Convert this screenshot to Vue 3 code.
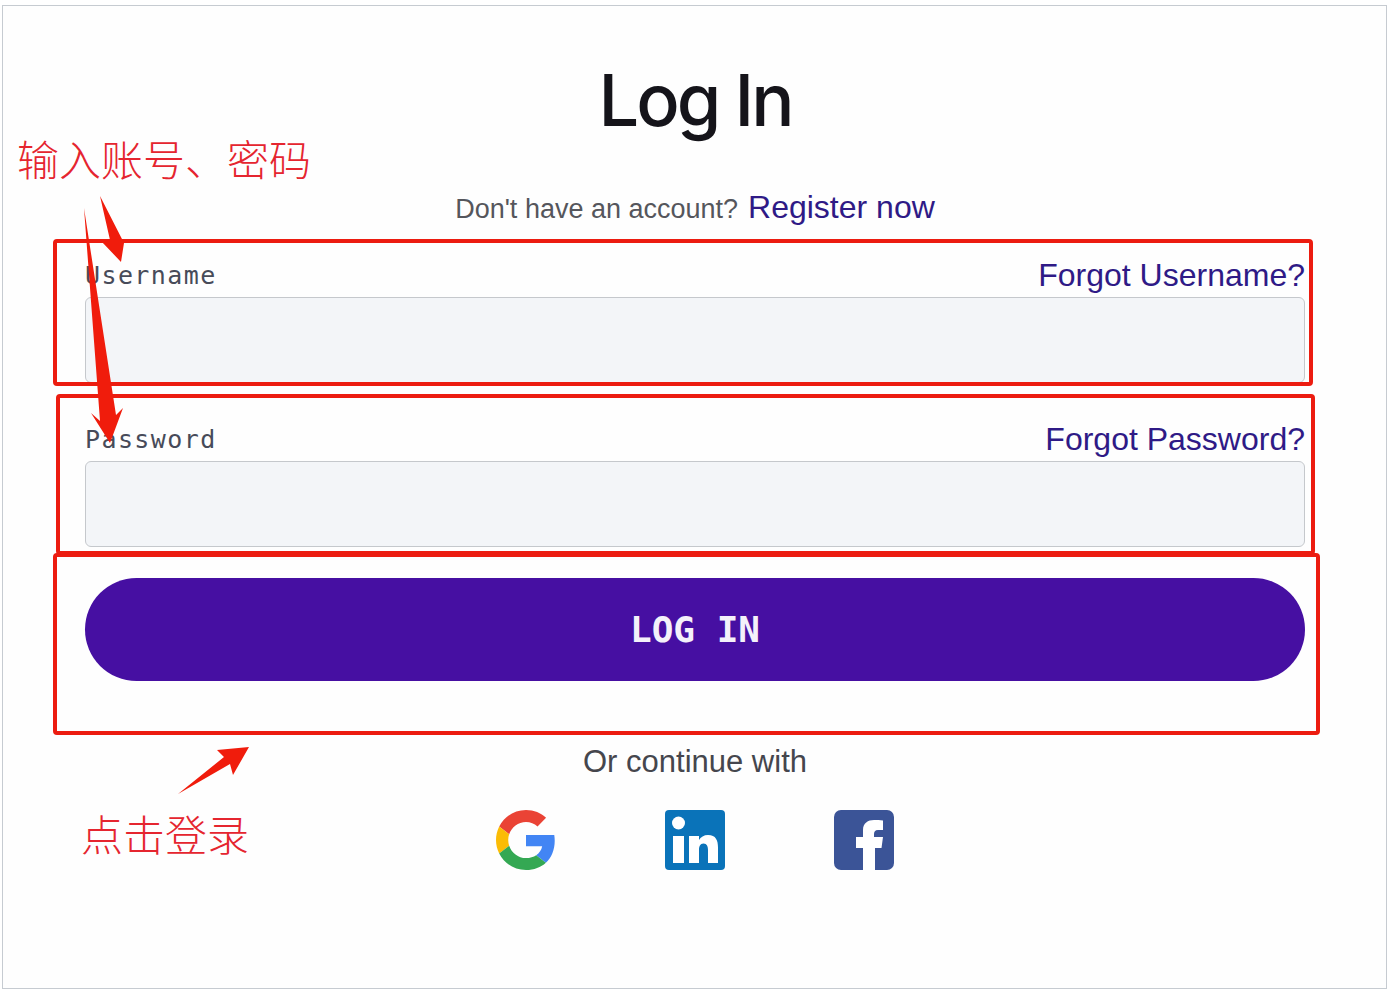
<template>
  <div class="frame">
    <form class="login" @submit.prevent>
      <h1 class="title">Log In</h1>
      <p class="subtitle">
        <span>Don't have an account?</span>
        <a class="link register" href="#">Register now</a>
      </p>

      <div v-for="field in fields" :key="field.label" class="field">
        <div class="field-head">
          <label class="field-label">{{ field.label }}</label>
          <a class="link forgot" href="#">{{ field.forgot }}</a>
        </div>
        <input class="field-input" :type="field.type" />
      </div>

      <button class="submit" type="submit">LOG IN</button>

      <p class="continue">Or continue with</p>
      <div class="socials">
        <svg class="social" viewBox="0 0 48 48" aria-label="Google">
          <path fill="#ea4335" d="M24 9.5c3.54 0 6.71 1.22 9.21 3.6l6.85-6.85C35.9 2.38 30.47 0 24 0 14.62 0 6.51 5.38 2.56 13.22l7.98 6.19C12.43 13.72 17.74 9.5 24 9.5z" />
          <path fill="#4285f4" d="M46.98 24.55c0-1.57-.15-3.09-.38-4.55H24v9.02h12.94c-.58 2.96-2.26 5.48-4.78 7.18l7.73 6c4.51-4.18 7.09-10.36 7.09-17.65z" />
          <path fill="#fbbc05" d="M10.53 28.59c-.48-1.45-.76-2.99-.76-4.59s.27-3.14.76-4.59l-7.98-6.19C.92 16.46 0 20.12 0 24c0 3.88.92 7.54 2.56 10.78l7.97-6.19z" />
          <path fill="#34a853" d="M24 48c6.48 0 11.93-2.13 15.89-5.81l-7.73-6c-2.15 1.45-4.92 2.3-8.16 2.3-6.26 0-11.57-4.22-13.47-9.91l-7.98 6.19C6.51 42.62 14.62 48 24 48z" />
        </svg>
        <svg class="social" viewBox="0 0 60 60" aria-label="LinkedIn">
          <rect width="60" height="60" rx="4" fill="#0a73b9" />
          <circle cx="13.5" cy="13" r="6.5" fill="#fff" />
          <rect x="8" y="26" width="11" height="27" fill="#fff" />
          <path fill="#fff" d="M24 26h10v4c1.6-3 5-5 9-5 8 0 10 5.500 10 12.500V53H43V40c0-3.500-1-6.500-4.500-6.500S34 36.500 34 40v13H24z" />
        </svg>
        <svg class="social" viewBox="0 0 60 60" aria-label="Facebook">
          <rect width="60" height="60" rx="7" fill="#3b5497" />
          <path fill="#fff" d="M29 60V38h-7V27h7v-7c0-7 5-10 11-10 3 0 6 0 9 .5V20h-5c-3 0-4 2-4 4v3h9l-1.500 11H41v22z" />
        </svg>
      </div>
    </form>

    <!-- 标注层:截图上手绘的红框、箭头和文字 -->
    <div class="note-box box-user"></div>
    <div class="note-box box-pass"></div>
    <div class="note-box box-submit"></div>
    <svg class="note-arrows" viewBox="0 0 1394 996">
      <polygon points="100,196 124,243 121,262 102,242 110,240" />
      <polygon points="84,208 116,415 123,408 110,443 91,413 100,421" />
      <polygon points="249,747 217,750 224,757 178,794 230,764 233,775" />
    </svg>
    <span class="note-text note-input">输入账号、密码</span>
    <span class="note-text note-click">点击登录</span>
  </div>
</template>

<script setup>
const fields = [
  { label: 'Username', forgot: 'Forgot Username?', type: 'text' },
  { label: 'Password', forgot: 'Forgot Password?', type: 'password' },
]
</script>

<style>
html,
body {
  background: #fff;
}
</style>

<style scoped>
.frame {
  position: relative;
  box-sizing: border-box;
  width: 1385px;
  height: 984px;
  margin: 5px 0 0 2px;
  border: 1px solid #c6cbd1;
  background: #fefefe;
  font-family: "Liberation Sans", Arial, sans-serif;
}

.login {
  box-sizing: border-box;
  width: 1220px;
  margin-left: 82px;
  padding-top: 54px;
}

.title {
  margin: 0;
  font-family: Inter, sans-serif;
  font-size: 72px;
  font-weight: 500;
  line-height: 80px;
  letter-spacing: -3px;
  text-align: center;
  color: #15141a;
}

.subtitle {
  display: flex;
  justify-content: center;
  align-items: baseline;
  gap: 10px;
  margin: 49px 0 0;
  font-size: 27px;
  line-height: 36px;
  color: #55565c;
}

.link {
  color: #2f1a86;
  text-decoration: none;
}
.register {
  font-size: 32px;
}

.field {
  margin-top: 36px;
}
.subtitle + .field {
  margin-top: 28px;
}
.field-head {
  display: flex;
  justify-content: space-between;
  align-items: center;
  height: 40px;
  margin-bottom: 2px;
}
.field-label {
  font-family: "DejaVu Sans Mono", monospace;
  font-size: 25px;
  letter-spacing: 1.4px;
  color: #474b59;
}
.forgot {
  font-size: 32px;
}
.field-input {
  display: block;
  box-sizing: border-box;
  width: 100%;
  height: 86px;
  border: 1px solid #c5c8cc;
  border-radius: 6px;
  background: #f3f5f8;
}

.submit {
  display: block;
  width: 100%;
  height: 103px;
  margin-top: 31px;
  border: 0;
  border-radius: 52px;
  background: #460fa2;
  font-family: "DejaVu Sans Mono", monospace;
  font-size: 36px;
  font-weight: 700;
  color: #f4f1fa;
}

.continue {
  margin: 63px 0 0;
  font-size: 31px;
  line-height: 36px;
  text-align: center;
  color: #45464d;
}

.socials {
  display: flex;
  justify-content: center;
  gap: 109px;
  margin-top: 30px;
}
.social {
  display: block;
  width: 60px;
  height: 60px;
}

/* 标注层 */
.note-box {
  position: absolute;
  box-sizing: border-box;
  border: 4px solid #ec1c10;
  border-radius: 4px;
}
.box-user {
  left: 50px;
  top: 233px;
  width: 1260px;
  height: 147px;
}
.box-pass {
  left: 53px;
  top: 388px;
  width: 1259px;
  height: 161px;
}
.box-submit {
  left: 50px;
  top: 547px;
  width: 1267px;
  height: 182px;
}
.note-arrows {
  position: absolute;
  left: -3px;
  top: -6px;
  width: 1394px;
  height: 996px;
  fill: #f01c0c;
  pointer-events: none;
}
.note-text {
  position: absolute;
  font-family: "Noto Sans CJK SC", sans-serif;
  font-size: 42px;
  font-weight: 300;
  line-height: 48px;
  white-space: nowrap;
  color: #e5252f;
}
.note-input {
  left: 14px;
  top: 128px;
}
.note-click {
  left: 78px;
  top: 803px;
}
</style>
